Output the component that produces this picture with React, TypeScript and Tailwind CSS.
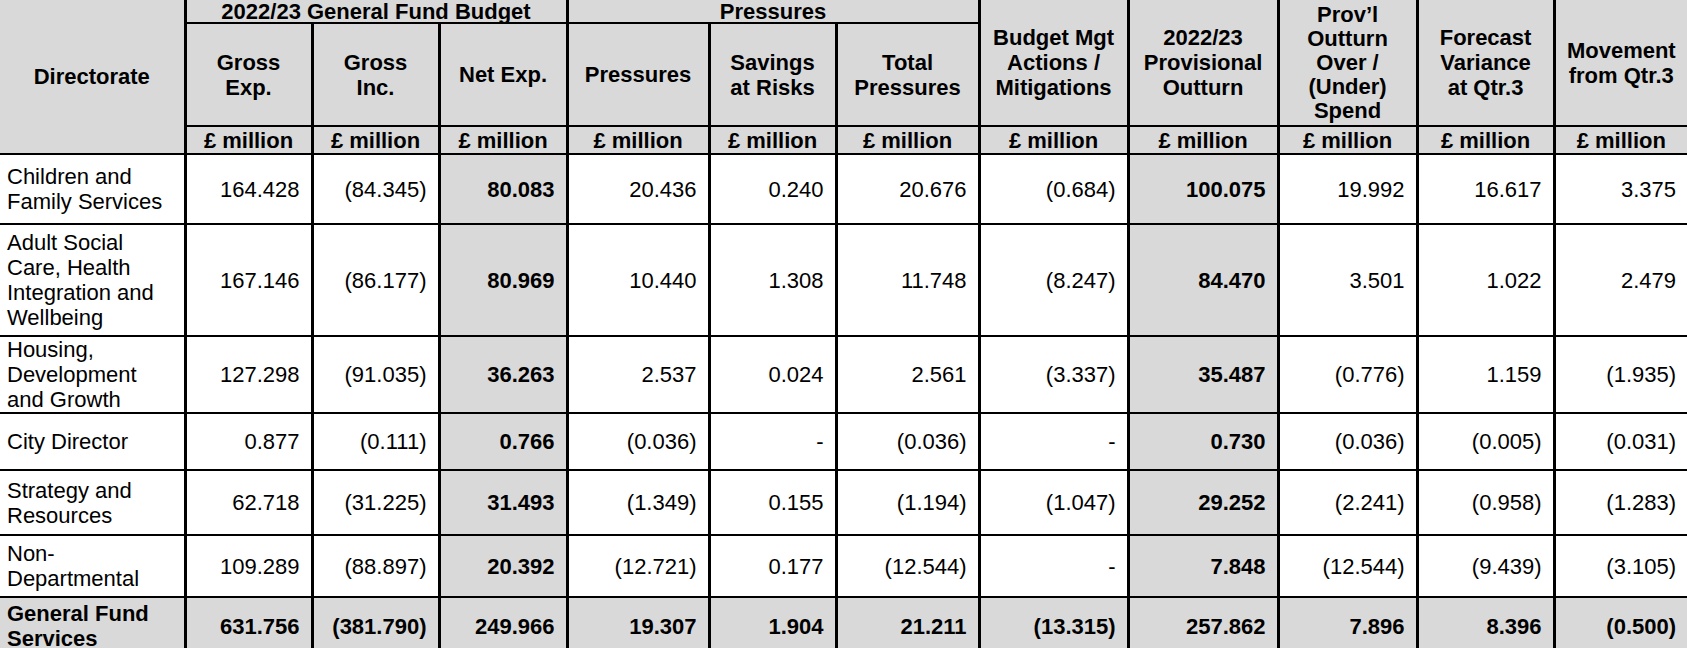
import React from "react";

// outturn table, 2022/23 general fund

type Row = {
  label: string[];
  h: string;
  vals: string[];
};

const rows: Row[] = [
  {
    label: ["Children and", "Family Services"],
    h: "h-[70px]",
    vals: ["164.428", "(84.345)", "80.083", "20.436", "0.240", "20.676", "(0.684)", "100.075", "19.992", "16.617", "3.375"],
  },
  {
    label: ["Adult Social", "Care, Health", "Integration and", "Wellbeing"],
    h: "h-[112px]",
    vals: ["167.146", "(86.177)", "80.969", "10.440", "1.308", "11.748", "(8.247)", "84.470", "3.501", "1.022", "2.479"],
  },
  {
    label: ["Housing,", "Development", "and Growth"],
    h: "h-[77px]",
    vals: ["127.298", "(91.035)", "36.263", "2.537", "0.024", "2.561", "(3.337)", "35.487", "(0.776)", "1.159", "(1.935)"],
  },
  {
    label: ["City Director"],
    h: "h-[57px]",
    vals: ["0.877", "(0.111)", "0.766", "(0.036)", "-", "(0.036)", "-", "0.730", "(0.036)", "(0.005)", "(0.031)"],
  },
  {
    label: ["Strategy and", "Resources"],
    h: "h-[65px]",
    vals: ["62.718", "(31.225)", "31.493", "(1.349)", "0.155", "(1.194)", "(1.047)", "29.252", "(2.241)", "(0.958)", "(1.283)"],
  },
  {
    label: ["Non-", "Departmental"],
    h: "h-[62px]",
    vals: ["109.289", "(88.897)", "20.392", "(12.721)", "0.177", "(12.544)", "-", "7.848", "(12.544)", "(9.439)", "(3.105)"],
  },
];

const total = ["631.756", "(381.790)", "249.966", "19.307", "1.904", "21.211", "(13.315)", "257.862", "7.896", "8.396", "(0.500)"];

// value columns with the grey fill and bold figures
const shaded = [2, 7];

const cell = "border-black border-b-2 border-r-[3px] p-0";
const lastCell = "border-black border-b-2 p-0";
const grey = "bg-[#d9d9d9]";

function Lines({ lines }: { lines: string[] }) {
  return (
    <>
      {lines.map((l, i) => (
        <React.Fragment key={i}>
          {i > 0 && <br />}
          {l}
        </React.Fragment>
      ))}
    </>
  );
}

export default function App() {
  return (
    <div className="w-[1687px] h-[648px] overflow-hidden bg-white text-black font-['Liberation_Sans',Arial,sans-serif] text-[22px] leading-[25px]">
      <table className="table-fixed border-collapse w-[1687px]">
        <colgroup>
          <col className="w-[185px]" />
          <col className="w-[127px]" />
          <col className="w-[127px]" />
          <col className="w-[128px]" />
          <col className="w-[142px]" />
          <col className="w-[127px]" />
          <col className="w-[143px]" />
          <col className="w-[149px]" />
          <col className="w-[150px]" />
          <col className="w-[139px]" />
          <col className="w-[137px]" />
          <col className="w-[133px]" />
        </colgroup>
        <thead>
          <tr className="h-[23px]">
            <th rowSpan={3} className={`${cell} ${grey} font-bold text-center align-middle`}>
              Directorate
            </th>
            <th colSpan={3} className={`${cell} ${grey} font-bold text-center align-middle leading-[21px]`}>
              2022/23 General Fund Budget
            </th>
            <th colSpan={3} className={`${cell} ${grey} font-bold text-center align-middle leading-[21px]`}>
              Pressures
            </th>
            <th rowSpan={2} className={`${cell} ${grey} font-bold text-center align-middle`}>
              <Lines lines={["Budget Mgt", "Actions /", "Mitigations"]} />
            </th>
            <th rowSpan={2} className={`${cell} ${grey} font-bold text-center align-middle`}>
              <Lines lines={["2022/23", "Provisional", "Outturn"]} />
            </th>
            <th rowSpan={2} className={`${cell} ${grey} font-bold text-center align-middle leading-[24px]`}>
              <Lines lines={["Prov\u2019l", "Outturn", "Over /", "(Under)", "Spend"]} />
            </th>
            <th rowSpan={2} className={`${cell} ${grey} font-bold text-center align-middle`}>
              <Lines lines={["Forecast", "Variance", "at Qtr.3"]} />
            </th>
            <th rowSpan={2} className={`${lastCell} ${grey} font-bold text-center align-middle`}>
              <Lines lines={["Movement", "from Qtr.3"]} />
            </th>
          </tr>
          <tr className="h-[103px]">
            <th className={`${cell} ${grey} font-bold text-center align-middle`}>
              <Lines lines={["Gross", "Exp."]} />
            </th>
            <th className={`${cell} ${grey} font-bold text-center align-middle`}>
              <Lines lines={["Gross", "Inc."]} />
            </th>
            <th className={`${cell} ${grey} font-bold text-center align-middle`}>Net Exp.</th>
            <th className={`${cell} ${grey} font-bold text-center align-middle`}>Pressures</th>
            <th className={`${cell} ${grey} font-bold text-center align-middle`}>
              <Lines lines={["Savings", "at Risks"]} />
            </th>
            <th className={`${cell} ${grey} font-bold text-center align-middle`}>
              <Lines lines={["Total", "Pressures"]} />
            </th>
          </tr>
          <tr className="h-[28px]">
            {total.map((_, i) => (
              <th
                key={i}
                className={`${i === total.length - 1 ? lastCell : cell} ${grey} font-bold text-center align-middle whitespace-nowrap`}
              >
                £ million
              </th>
            ))}
          </tr>
        </thead>
        <tbody>
          {rows.map((r) => (
            <tr key={r.label.join(" ")} className={r.h}>
              <td className={`${cell} pl-[7px] text-left align-middle`}>
                <Lines lines={r.label} />
              </td>
              {r.vals.map((v, i) => (
                <td
                  key={i}
                  className={`${i === r.vals.length - 1 ? lastCell : cell} pr-[11px] text-right align-middle whitespace-nowrap ${
                    shaded.includes(i) ? `${grey} font-bold` : ""
                  }`}
                >
                  {v}
                </td>
              ))}
            </tr>
          ))}
          <tr className="h-[58px]">
            <td className={`${cell} ${grey} pl-[7px] text-left align-middle font-bold`}>
              <Lines lines={["General Fund", "Services"]} />
            </td>
            {total.map((v, i) => (
              <td
                key={i}
                className={`${i === total.length - 1 ? lastCell : cell} ${grey} pr-[11px] text-right align-middle font-bold whitespace-nowrap`}
              >
                {v}
              </td>
            ))}
          </tr>
        </tbody>
      </table>
    </div>
  );
}
